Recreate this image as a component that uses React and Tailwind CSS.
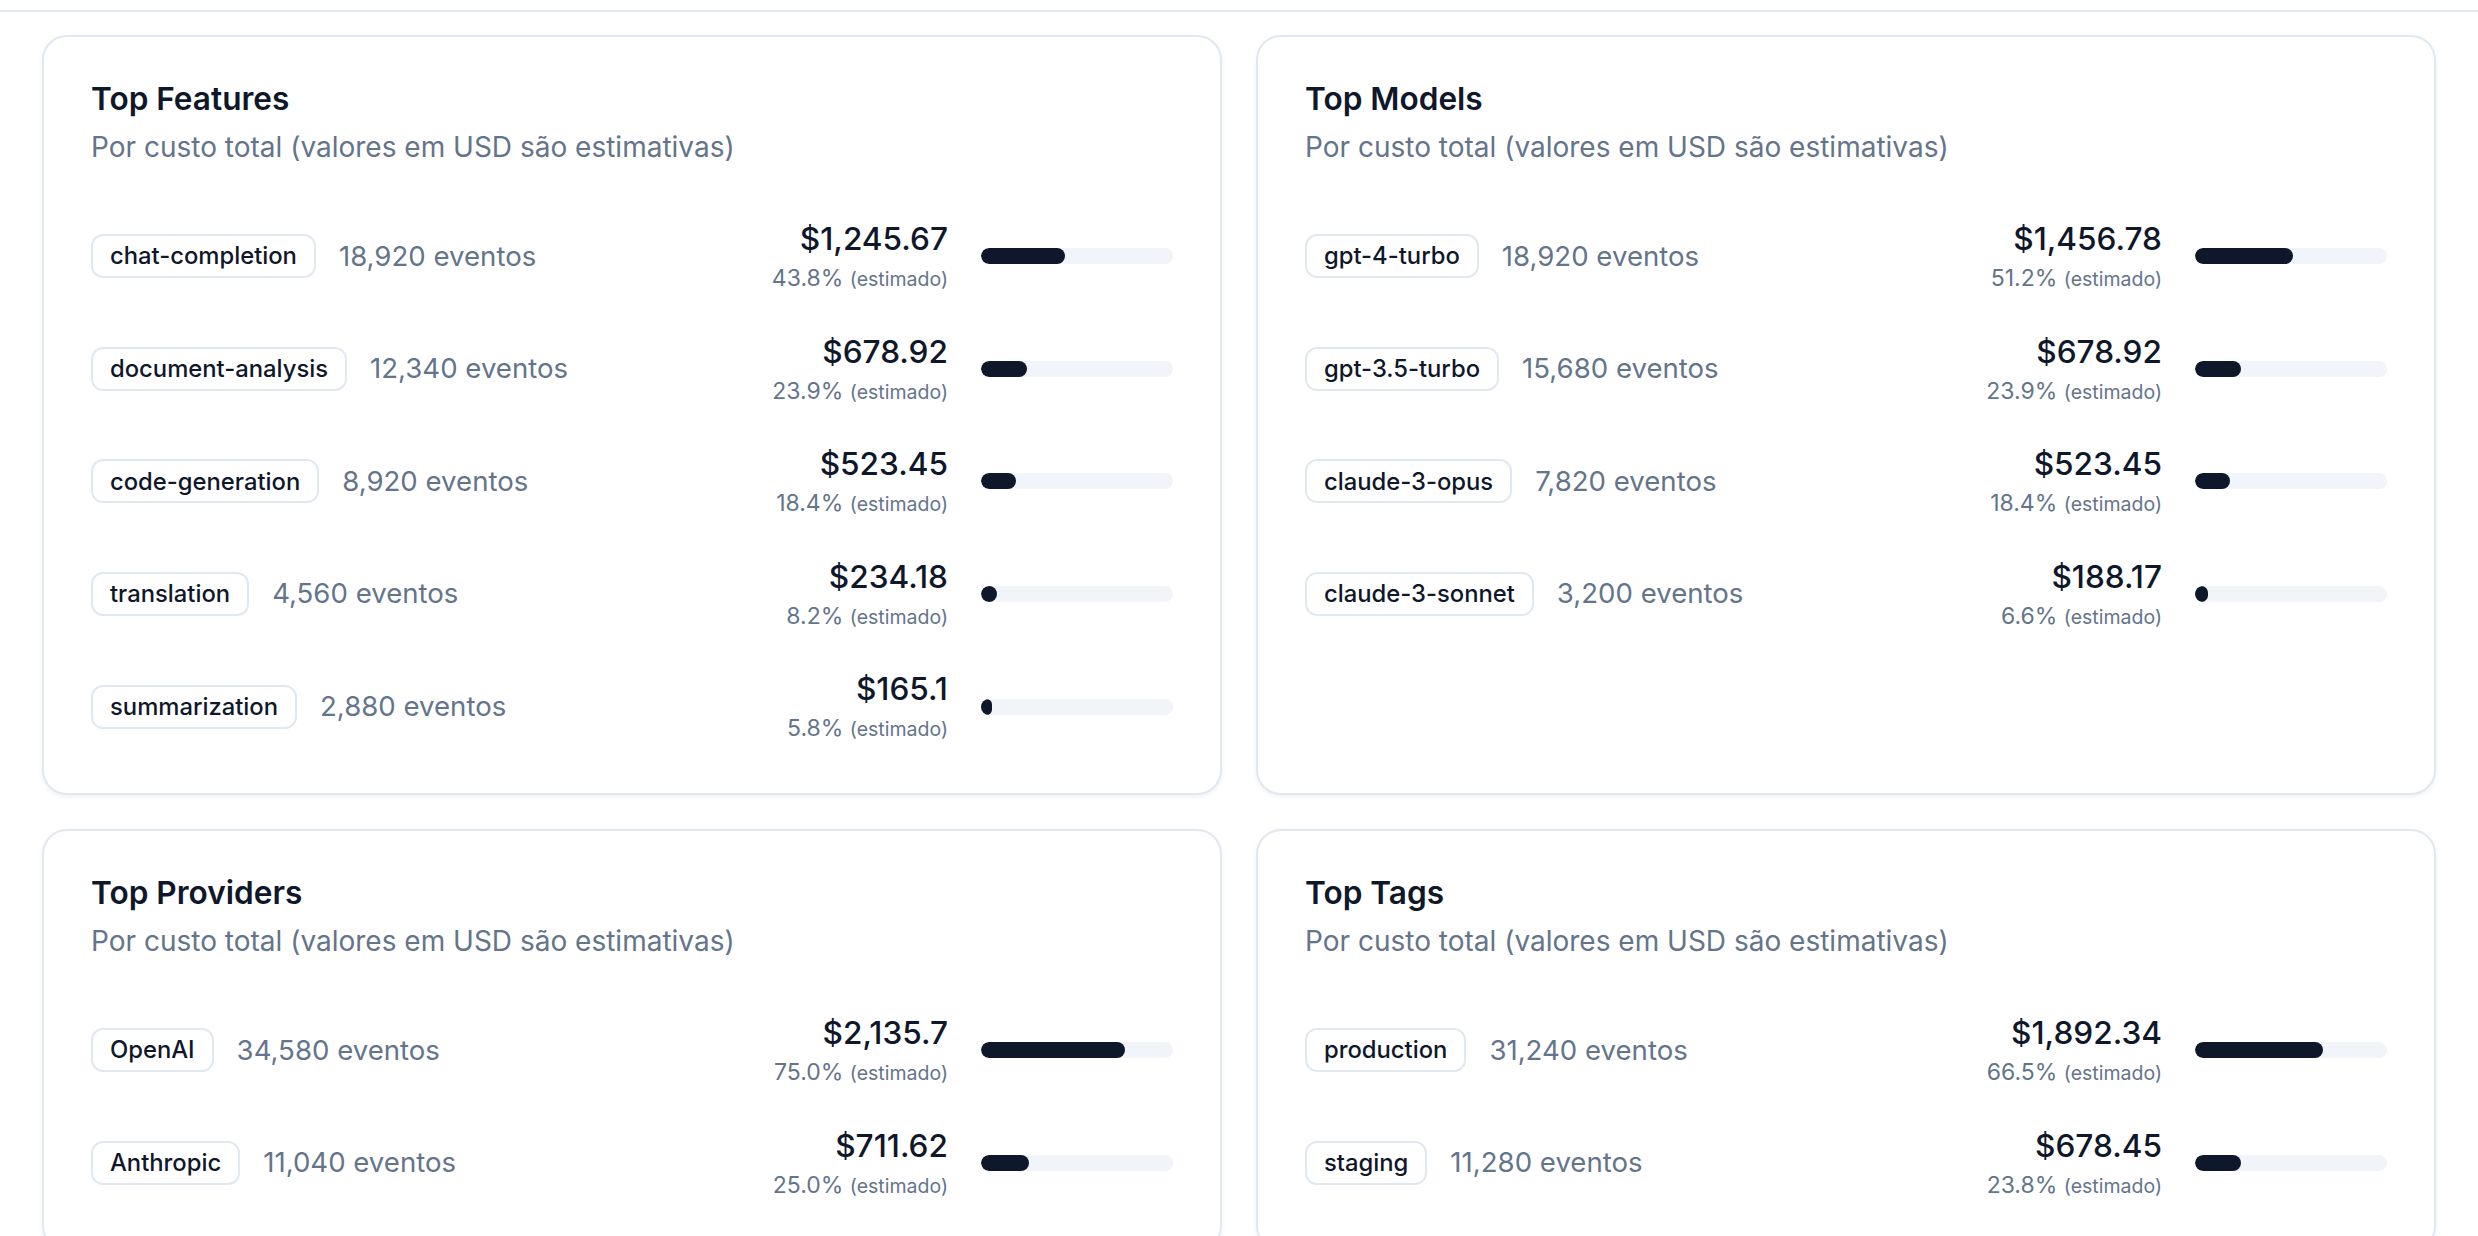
const SECTIONS = [
  {
    title: 'Top Features',
    rows: [
      { name: 'chat-completion', events: '18,920', cost: '$1,245.67', pct: 43.8 },
      { name: 'document-analysis', events: '12,340', cost: '$678.92', pct: 23.9 },
      { name: 'code-generation', events: '8,920', cost: '$523.45', pct: 18.4 },
      { name: 'translation', events: '4,560', cost: '$234.18', pct: 8.2 },
      { name: 'summarization', events: '2,880', cost: '$165.1', pct: 5.8 },
    ],
  },
  {
    title: 'Top Models',
    rows: [
      { name: 'gpt-4-turbo', events: '18,920', cost: '$1,456.78', pct: 51.2 },
      { name: 'gpt-3.5-turbo', events: '15,680', cost: '$678.92', pct: 23.9 },
      { name: 'claude-3-opus', events: '7,820', cost: '$523.45', pct: 18.4 },
      { name: 'claude-3-sonnet', events: '3,200', cost: '$188.17', pct: 6.6 },
    ],
  },
  {
    title: 'Top Providers',
    rows: [
      { name: 'OpenAI', events: '34,580', cost: '$2,135.7', pct: 75.0 },
      { name: 'Anthropic', events: '11,040', cost: '$711.62', pct: 25.0 },
    ],
  },
  {
    title: 'Top Tags',
    rows: [
      { name: 'production', events: '31,240', cost: '$1,892.34', pct: 66.5 },
      { name: 'staging', events: '11,280', cost: '$678.45', pct: 23.8 },
    ],
  },
];

function Row({ row }) {
  return (
    <div className="flex items-center justify-between">
      <div className="flex items-center gap-[23px]">
        <span className="inline-flex h-[44px] items-center rounded-[12px] border-2 border-[#e2e8f0] px-[17px] text-[23.8px] font-medium text-[#0f172a]">
          {row.name}
        </span>
        <span className="text-[27.6px] text-[#64748b]">{row.events} eventos</span>
      </div>
      <div className="flex items-center gap-[33px]">
        <div className="text-right">
          <p className="text-[31.6px] font-medium leading-[44px] text-[#0f172a]">{row.cost}</p>
          <p className="mt-[2px] text-[23px] leading-[31.6px] text-[#64748b]">
            {row.pct.toFixed(1)}% <span className="text-[19.5px]">(estimado)</span>
          </p>
        </div>
        <div className="h-[16px] w-[192px] overflow-hidden rounded-full bg-[#f1f5f9]">
          <div className="h-full rounded-full bg-[#0f172a]" style={{ width: `${row.pct}%` }} />
        </div>
      </div>
    </div>
  );
}

function RankCard({ section }) {
  return (
    <div className="rounded-[25px] border-2 border-[#e2e8f0] bg-white px-[47px] pb-[47px] pt-[40px] shadow-[0_2px_5px_rgba(15,23,42,0.06)]">
      <h3 className="text-[31.6px] font-semibold leading-[44px] text-[#0f172a]">{section.title}</h3>
      <p className="mt-[4px] text-[28px] leading-[44px] text-[#64748b]">
        Por custo total (valores em USD são estimativas)
      </p>
      <div className="mt-[48px] flex flex-col gap-[34px]">
        {section.rows.map((row) => (
          <Row key={row.name} row={row} />
        ))}
      </div>
    </div>
  );
}

export default function App() {
  return (
    <div className="min-h-screen bg-white font-['Inter','Noto_Sans',sans-serif]">
      <div className="h-[12px] border-b-2 border-[#e2e8f0]" />
      <div className="grid grid-cols-2 gap-[34px] px-[42px] pb-[40px] pt-[23px]">
        {SECTIONS.map((s) => (
          <RankCard key={s.title} section={s} />
        ))}
      </div>
    </div>
  );
}
